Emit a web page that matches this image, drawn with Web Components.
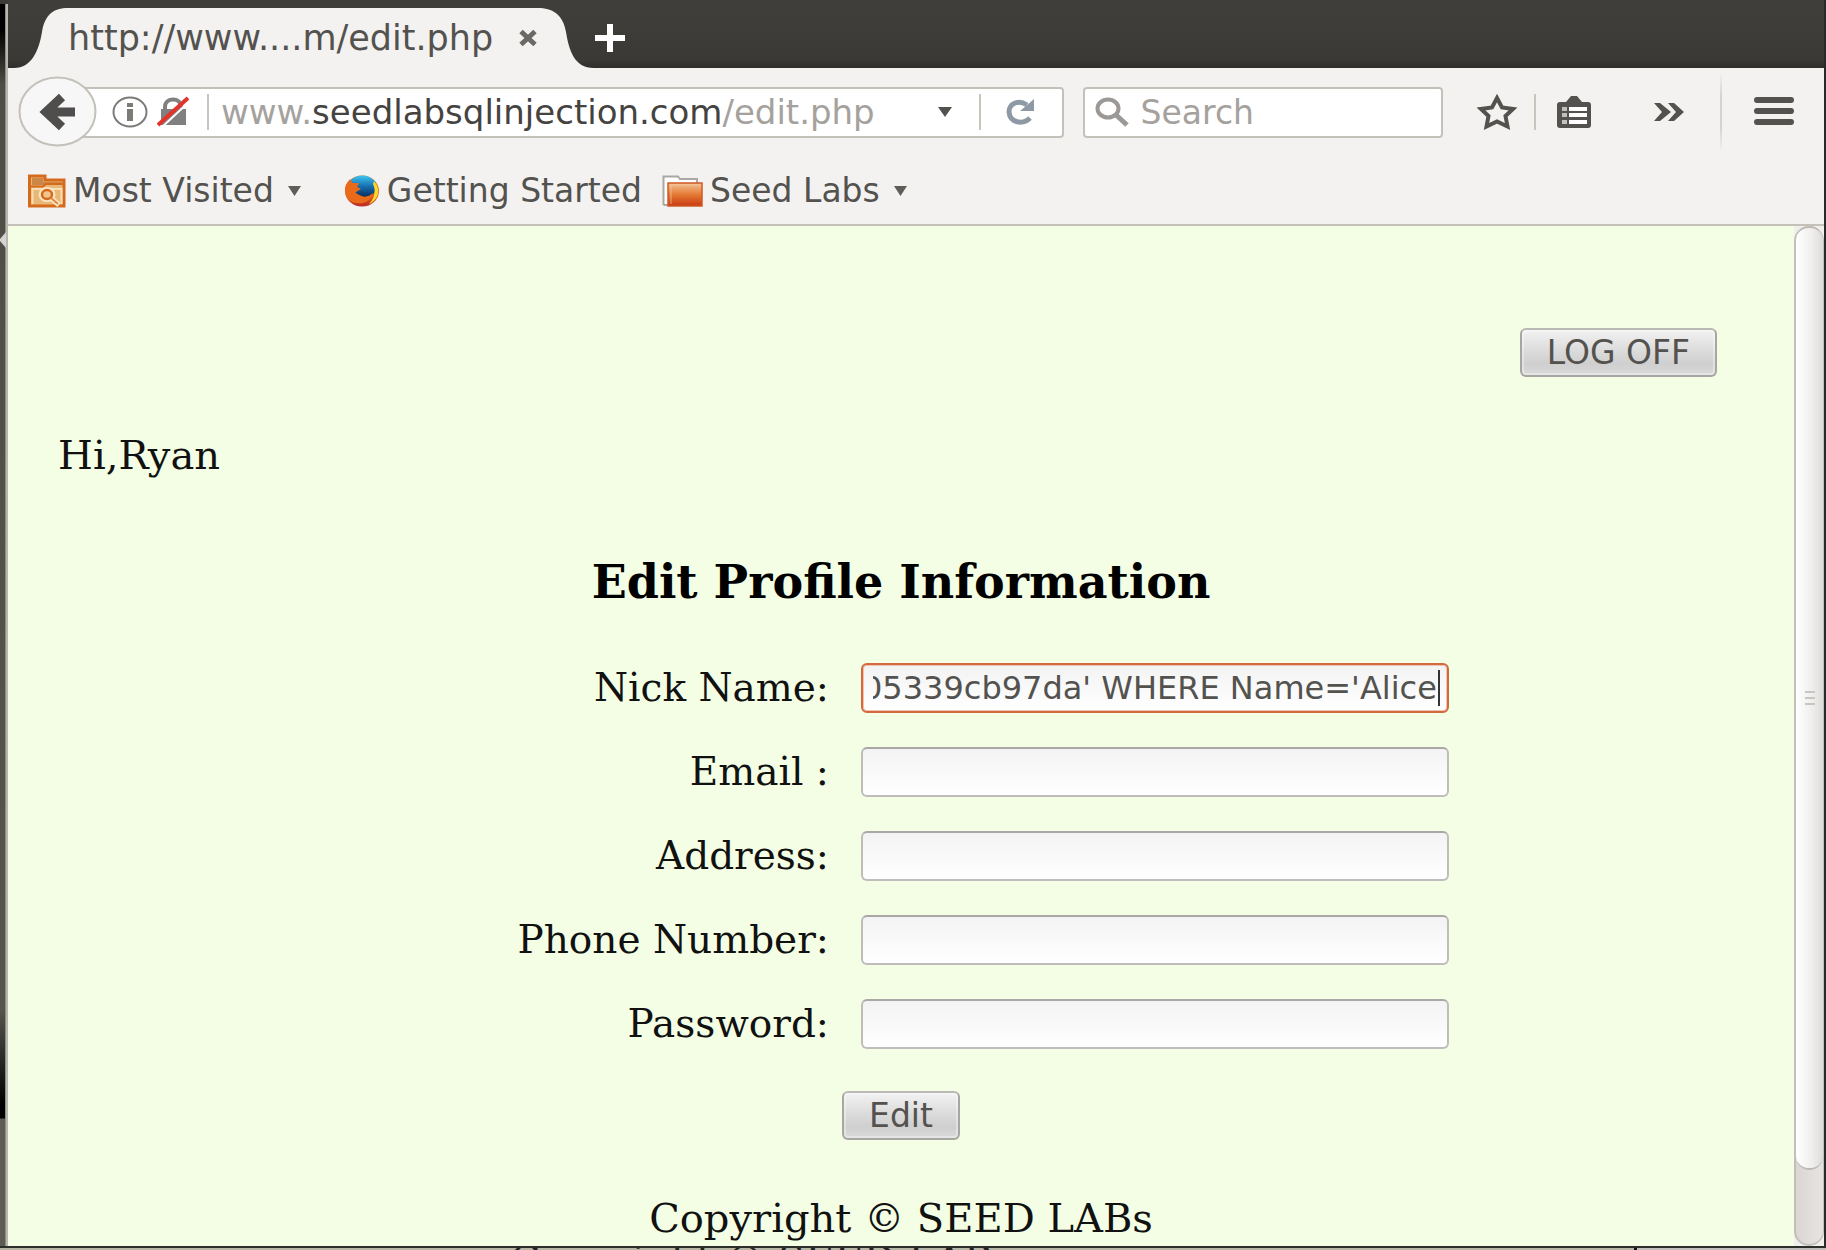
<!DOCTYPE html>
<html lang="en">
<head>
<meta charset="utf-8">
<title>http://www.seedlabsqlinjection.com/edit.php</title>
<style>
html,body{margin:0;height:100%}
body{background:#f3f2f0;overflow:hidden}
</style>
</head>
<body>
<browser-window>
  <tab-strip slot="tabs" label="http://www....m/edit.php"></tab-strip>
  <nav-bar slot="nav"></nav-bar>
  <bookmark-bar slot="bookmarks">
    <bookmark-item label="Most Visited" icon="visited" menu></bookmark-item>
    <bookmark-item label="Getting Started" icon="fox"></bookmark-item>
    <bookmark-item label="Seed Labs" icon="folder" menu></bookmark-item>
  </bookmark-bar>
  <profile-page slot="page">
    <profile-field label="Nick Name:" name="nick" value="05339cb97da' WHERE Name='Alice" active></profile-field>
    <profile-field label="Email :" name="email"></profile-field>
    <profile-field label="Address:" name="address"></profile-field>
    <profile-field label="Phone Number:" name="phone"></profile-field>
    <profile-field label="Password:" name="password"></profile-field>
  </profile-page>
  <scroll-track slot="scroll"></scroll-track>
</browser-window>

<script>
const define = (name, html, setup) => {
  const t = document.createElement('template');
  customElements.define(name, class extends HTMLElement {
    connectedCallback() {
      if (this.shadowRoot) return;
      t.innerHTML = typeof html === 'function' ? html(this) : html;
      this.attachShadow({ mode: 'open' }).append(t.content.cloneNode(true));
      if (setup) setup(this, this.shadowRoot);
    }
  });
};

define('browser-window', `
<style>
:host{display:grid;grid-template-columns:8px minmax(0,1fr) 2px;grid-template-rows:minmax(0,1fr) 4px;height:100vh;box-sizing:border-box;
  --ui:"DejaVu Sans",sans-serif;font-family:var(--ui);color:#54524f}
.edge{position:relative;background:
  linear-gradient(#3c3b37 0 4px,transparent 4px),
  linear-gradient(90deg,transparent 5px,#8d8b85 5px 6px,#b9b6b0 6px 8px),
  linear-gradient(#000 4px 30px,#4e4e47 84px,#55554d 1010px,#000 1105px 1118px,#5c5c55 1119px)}
.edge svg{position:absolute;left:0;top:232px}
.main{display:flex;flex-direction:column;min-width:0;min-height:0}
.body{flex:1;display:flex;min-height:0;background:#f3fee4}
.right{background:#2a2a2a}
.below{grid-column:1/-1;border-top:2px solid #2b2e29;overflow:hidden;display:flex;background:#b3b7a4}
.below span{flex:1;height:2px;padding-left:510px;overflow:hidden;font:40px/24px "DejaVu Serif",serif;color:#222;white-space:nowrap}
.below i{width:189px;border-left:3px solid #111;background:#bfbfbd}
</style>
<div class="edge"><svg width="6" height="16"><path d="M6 0V16L0 9Q-1 8 0 7Z" fill="#d5d4d0"/></svg></div>
<div class="main">
  <slot name="tabs"></slot><slot name="nav"></slot><slot name="bookmarks"></slot>
  <div class="body"><slot name="page"></slot><slot name="scroll"></slot></div>
</div>
<div class="right"></div>
<div class="below"><span>Copyright © SEED LABs</span><i></i></div>`);

define('tab-strip', el => `
<style>
:host{display:flex;align-items:flex-end;height:68px;padding-left:6px;background:linear-gradient(#413f3b,#3b3935 60px,#302e2a)}
.tab{height:60px;display:flex;align-items:center;flex:none}
.mid{display:flex;align-items:center;justify-content:space-between;background:#f3f2f0;height:60px;width:470px}
.title{font-size:35px;line-height:40px;white-space:nowrap}
svg{display:block;flex:none}
button{border:0;background:none;padding:0;margin:0}
.new{align-self:center;padding-top:8px}
</style>
<div class="tab">
  <svg width="54" height="60"><path d="M0 60C18 60 25 42 28 24C31 6 40 0 54 0V60Z" fill="#f3f2f0"/></svg>
  <div class="mid"><span class="title">${el.getAttribute('label')}</span>
  <button aria-label="Close tab"><svg width="20" height="18" viewBox="0 0 20 18"><path d="M3 2.500L17 15.500M17 2.500L3 15.500" stroke="#6b6965" stroke-width="5"/></svg></button></div>
  <svg width="56" height="60"><path d="M56 60C36 60 31 42 28 24C25 6 14 0 0 0V60Z" fill="#f3f2f0"/></svg>
</div>
<button class="new" aria-label="New tab"><svg width="34" height="30" viewBox="0 0 34 30"><path d="M1 15H31M16 1V29" stroke="#fff" stroke-width="6"/></svg></button>`);

define('nav-bar', `
<style>
:host{display:flex;align-items:center;height:88px;padding:0 30px 0 10px;background:#f3f2f0}
svg{display:block;flex:none}
button{border:0;background:none;padding:0;margin:0;flex:none}
.back{position:relative;z-index:1;margin-right:-26px}
.box{display:flex;align-items:center;height:51px;box-sizing:border-box;border:2px solid #c4c0ba;border-radius:4px;background:#fff}
.url{flex:984 1 0;padding-left:38px;min-width:0}
.search{flex:359 1 0;margin-left:19px;padding-left:10px;gap:12px;min-width:0}
.addr{flex:1;min-width:0;font-size:34px;line-height:44px;white-space:nowrap;overflow:hidden;color:#a5a29e;margin-left:12px}
.addr b{font-weight:400;color:#45433f}
.sep{width:2px;height:36px;background:#c8c4be;flex:none}
input{flex:1;min-width:0;width:100%;border:0;outline:0;background:none;padding:2px 0 0;margin:0;font:33px/44px var(--ui);color:#54524f}
input::placeholder{color:#a5a29e;opacity:1}
.icons{display:flex;align-items:center;flex:none}
.fade{width:2px;height:80px;background:linear-gradient(transparent,#d6d3cf 30%,#d6d3cf 70%,transparent)}
</style>
<button class="back" aria-label="Back"><svg width="80" height="72" viewBox="0 0 80 72"><ellipse cx="39.500" cy="35.500" rx="38" ry="34" fill="#f7f7f7" stroke="#c4c0ba" stroke-width="2"/><path d="M44 21L28 36L44 51M28 36H57" fill="none" stroke="#504e4c" stroke-width="9"/></svg></button>
<div class="box url">
  <svg width="36" height="32" viewBox="0 0 36 32"><ellipse cx="18" cy="16" rx="16.500" ry="14.500" fill="none" stroke="#7d7b78" stroke-width="2"/><path d="M15 7h6v4h-6zM15 13h6v12h-6z" fill="#7d7b78"/></svg>
  <svg width="34" height="32" viewBox="0 0 34 32" style="margin-left:9px"><path d="M8 15V11C8 1 24 1 24 11V15" fill="none" stroke="#808080" stroke-width="4"/><path d="M4 13H29V29H4Z" fill="#808080"/><path d="M4 32L33 5" stroke="#fff" stroke-width="2"/><path d="M1 29L31 2" stroke="#e3342b" stroke-width="4"/></svg>
  <span class="sep" style="margin-left:16px"></span>
  <span class="addr">www.<b>seedlabsqlinjection.com</b>/edit.php</span>
  <button aria-label="Show history"><svg width="16" height="12" viewBox="0 0 16 12"><path d="M1 1H15L8 11Z" fill="#54524f"/></svg></button>
  <span class="sep" style="margin:0 25px 0 26px"></span>
  <button aria-label="Reload" style="margin-right:26px"><svg width="30" height="28" viewBox="0 0 30 28"><path d="M21 7C12 1 3 6 3 14C4 25 17 27 24 20" fill="none" stroke="#8d9aa6" stroke-width="5"/><path d="M28 1V13H14L20 8Z" fill="#8d9aa6"/></svg></button>
</div>
<div class="box search">
  <svg width="34" height="30" viewBox="0 0 34 30"><ellipse cx="13" cy="11.500" rx="10.500" ry="9" fill="none" stroke="#9b9896" stroke-width="4"/><path d="M20 17L32 28" stroke="#9b9896" stroke-width="5"/></svg>
  <input type="text" aria-label="Search" placeholder="Search">
</div>
<div class="icons">
  <button aria-label="Bookmark this page" style="margin-left:33px"><svg width="42" height="38" viewBox="0 0 42 38"><path d="M21 5L26 14.500L37 16L29.500 23L31.500 33.500L21 28.500L10.500 33.500L12.500 23L5 16L16 14.500Z" fill="none" stroke="#54524f" stroke-width="4"/></svg></button>
  <span class="sep" style="margin:0 20px 0 16px"></span>
  <button aria-label="Bookmarks list"><svg width="36" height="34" viewBox="0 0 36 34"><path d="M4 7H10L15 1H21L26 7H32Q35 7 35 10V30Q35 33 32 33H4Q1 33 1 30V10Q1 7 4 7Z" fill="#54524f"/><path d="M6 12h5v4h-5zM6 18h5v4h-5zM6 25h5v4h-5z" fill="#c4c2c0"/><path d="M13 12h18v4h-18zM13 18h18v4h-18zM13 25h18v4h-18z" fill="#fff"/></svg></button>
  <button aria-label="More tools" style="margin-left:62px"><svg width="31" height="20" viewBox="0 0 31 20"><path d="M0 1H6L17 10L6 19H0L8 10ZM14 1H20L30 10L20 19H14L22 10Z" fill="#54524f"/></svg></button>
  <span class="fade" style="margin:0 32px 0 35px"></span>
  <button aria-label="Menu"><svg width="40" height="30" viewBox="0 0 40 30"><path d="M3 3H37M3 14H37M3 25H37" stroke="#54524f" stroke-width="6" stroke-linecap="round"/></svg></button>
</div>`);

define('bookmark-bar', `
<style>:host{display:flex;align-items:center;gap:20px;height:68px;padding:0 20px;border-bottom:2px solid #c4c0ba;background:#f3f2f0}</style><slot></slot>`);

const icons = {
  visited: `<svg width="38" height="34" viewBox="0 0 38 34"><path d="M1.500 32V2H17V6H36V32Z" fill="#e9b876" stroke="#d56a1c" stroke-width="3"/><path d="M4 4H15V8H34V11H4Z" fill="#cc8645"/><path d="M3 12.500H15L18 10H35" fill="none" stroke="#d56a1c" stroke-width="2"/><path d="M4.500 30V15H33.500V30" fill="none" stroke="#f8ddb5" stroke-width="2"/><ellipse cx="19" cy="20.500" rx="6" ry="5" fill="none" stroke="#fbe6c8" stroke-width="5"/><path d="M23 24L31 31" stroke="#fbe6c8" stroke-width="5"/><ellipse cx="19" cy="20.500" rx="5" ry="4.500" fill="#efc48f" stroke="#d56a1c" stroke-width="2.500"/><path d="M23 24L30 30" stroke="#e08a3f" stroke-width="2"/></svg>`,
  fox: `<svg width="36" height="32" viewBox="0 0 36 32"><defs><linearGradient id="b" x2="0" y2="1"><stop stop-color="#3fc4f0"/><stop offset=".5" stop-color="#1670b0"/><stop offset="1" stop-color="#0a2b5c"/></linearGradient><linearGradient id="o" x2="0" y2="1"><stop stop-color="#f08a28"/><stop offset=".6" stop-color="#e86518"/><stop offset="1" stop-color="#bb2a26"/></linearGradient></defs><ellipse cx="18" cy="16" rx="17" ry="15.500" fill="url(#o)"/><path d="M6 6C13-2 27-1 32 8C33 17 29 22 20 22L11 18L16 14L8 9Z" fill="url(#b)"/><path d="M30 6C37 14 35 25 25 29C31 23 32 15 29 9Z" fill="#fbd92f"/><path d="M3 8L6 4L8 8L15 8L13 12L17 14L11 17C15 23 24 23 29 18C27 29 12 31 5 25C0 20 0 12 3 8Z" fill="#e96b1a"/></svg>`,
  folder: `<svg width="41" height="32" viewBox="0 0 41 32"><defs><linearGradient id="g" x2="0" y2="1"><stop stop-color="#f3c193"/><stop offset=".5" stop-color="#e57a35"/><stop offset="1" stop-color="#c93a12"/></linearGradient></defs><path d="M1.500 30V1.500H16L18 4H35V12" fill="#fff" stroke="#aaa7a4" stroke-width="2"/><path d="M1.500 30H8" stroke="#aaa7a4" stroke-width="2"/><path d="M6 8H40V31H6Z" fill="url(#g)" stroke="#cf5a26" stroke-width="1.500"/><path d="M9 29V10H38" fill="none" stroke="#f5c9a0" stroke-width="1" opacity=".7"/></svg>`
};
define('bookmark-item', el => `
<style>
:host{display:block}
:host([menu]){padding-right:22px}
button{display:flex;align-items:center;gap:7px;border:0;background:none;padding:2px 0 0;margin:0;font:33px/44px var(--ui);color:#54524f;white-space:nowrap}
svg{display:block;flex:none}
.menu{margin-left:6px}
</style>
<button>${icons[el.getAttribute('icon')]}<span>${el.getAttribute('label')}</span>${el.hasAttribute('menu') ? '<svg class="menu" width="15" height="12" viewBox="0 0 15 12"><path d="M1 1H14L7.500 11Z" fill="#5f5d5a"/></svg>' : ''}</button>`);

define('push-button', `
<style>
:host{display:block}
button{height:49px;padding:1px 25px 0;border:2px solid #a8a6a3;border-top-color:#bbb9b6;border-radius:6px;background:linear-gradient(#f2f2f2,#dcdcdc 45%,#cfcfcf 75%,#dadada);box-shadow:inset 0 0 0 2px #ffffff55;font:33px/40px var(--ui);color:#54524f;white-space:nowrap}
</style><button type="button"><slot></slot></button>`);

define('profile-field', el => `
<style>
:host{display:grid;grid-template-columns:1fr 588px;column-gap:32px;align-items:center}
label{text-align:right;font:39px/44px "DejaVu Serif",serif;color:#111;white-space:nowrap}
.wrap{position:relative}
input{display:block;width:100%;height:50px;box-sizing:border-box;border:2px solid #bfbdba;border-top-color:#aaa8a4;border-radius:6px;outline:0;padding:0 10px;background:linear-gradient(#f3f3f3,#fff);font:32px/44px var(--ui);color:#54524f}
:host([active]) input{border-color:#d2693f;box-shadow:inset 0 0 0 1px #efc4b0}
.caret{position:absolute;right:9px;top:7px;width:2px;height:36px;background:#333}
</style>
<label for="f">${el.getAttribute('label')}</label>
<div class="wrap"><input id="f" type="text" name="${el.getAttribute('name')}" value="${el.getAttribute('value') || ''}">${el.hasAttribute('active') ? '<span class="caret"></span>' : ''}</div>`,
(el, root) => {
  if (!el.hasAttribute('active')) return;
  const input = root.querySelector('input');
  const toEnd = () => { input.scrollLeft = input.scrollWidth; };
  toEnd();
  addEventListener('load', toEnd);
});

define('profile-page', `
<style>
:host{display:flex;flex-direction:column;flex:1;min-width:0;overflow:hidden;background:#f3fee4;font-family:"DejaVu Serif",serif;color:#111}
.top{display:flex;justify-content:flex-end;padding:102px 77px 0 0}
p{margin:0;font-size:40px;line-height:44px}
.hi{padding:56px 0 0 50px}
h3{margin:80px 0 0;text-align:center;font-size:46px;line-height:50px;color:#000}
form{width:1096px;max-width:100%;margin:56px auto 0;display:flex;flex-direction:column;gap:34px}
.send{display:flex;justify-content:center;padding-top:42px}
.copy{text-align:center;padding-top:56px}
</style>
<div class="top"><push-button>LOG OFF</push-button></div>
<p class="hi">Hi,Ryan</p>
<h3>Edit Profile Information</h3>
<form><slot></slot></form>
<div class="send"><push-button>Edit</push-button></div>
<p class="copy">Copyright © SEED LABs</p>`);

define('scroll-track', `
<style>
:host{display:flex;flex-direction:column;width:30px;box-sizing:border-box;border:2px solid #c2beb9;border-right-width:1px;border-radius:16px;background:linear-gradient(90deg,#dad6d4,#e6e4e2);box-shadow:0 0 0 8px #f0efed;clip-path:inset(0)}
.thumb{flex:1;margin:-2px 0 74px;border:2px solid #bdb9b4;border-width:2px 0;border-radius:14px;background:linear-gradient(90deg,#fff,#efeeed 60%,#dedcda);display:flex;flex-direction:column;align-items:center;justify-content:center;gap:4px}
i{width:10px;height:2px;background:#c9c6c2}
</style><div class="thumb"><i></i><i></i><i></i></div>`);
</script>
</body>
</html>
